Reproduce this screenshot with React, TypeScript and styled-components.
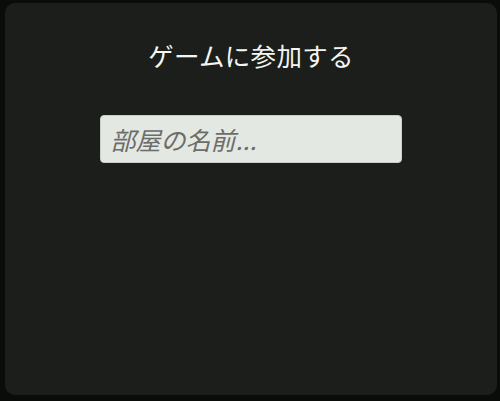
import React from "react";
import styled, { createGlobalStyle } from "styled-components";

const GlobalStyle = createGlobalStyle`
  html, body {
    margin: 0;
    padding: 0;
    background: #0a0c09;
  }
  #root {
    width: 500px;
    height: 401px;
  }
`;

const Frame = styled.div`
  box-sizing: border-box;
  width: 500px;
  height: 401px;
  padding: 3px 3px 6px 5px;
  background: #0a0c09;
`;

const Panel = styled.div`
  box-sizing: border-box;
  height: 100%;
  border-radius: 10px;
  background: #1b1e1a;
  display: flex;
  flex-direction: column;
  align-items: center;
  padding-top: 35px;
  font-family: "Noto Sans CJK JP", "Noto Sans", sans-serif;
`;

const Title = styled.h1`
  margin: 0;
  color: #f4f6f2;
  font-size: 25.5px;
  font-weight: 400;
  line-height: 34px;
  letter-spacing: 0.3px;
`;

const Field = styled.input`
  box-sizing: border-box;
  margin: 43px 0 0 -1px;
  width: 302px;
  height: 48px;
  padding: 0 10px;
  border: 1px solid #c9cfc8;
  border-radius: 4px;
  background: #e3e8e3;
  color: #333;
  font-family: "Noto Sans CJK JP", "Noto Sans", sans-serif;
  font-size: 25px;
  outline: none;

  &::placeholder {
    color: #6b6d6a;
    font-style: italic;
  }
`;

const App = () => {
  return (
    <>
      <GlobalStyle />
      <Frame>
        <Panel>
          <Title>ゲームに参加する</Title>
          <Field type="text" placeholder="部屋の名前..." />
        </Panel>
      </Frame>
    </>
  );
};

export default App;
